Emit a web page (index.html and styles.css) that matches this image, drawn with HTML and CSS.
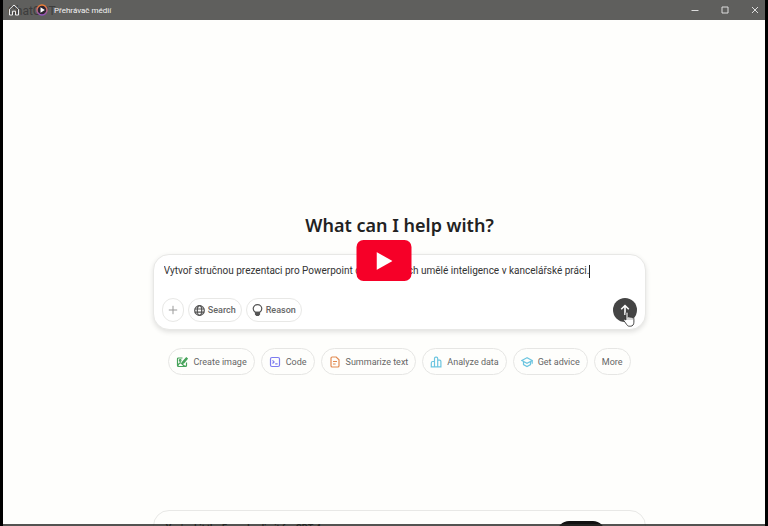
FILE: index.html
```html
<!DOCTYPE html>
<html lang="cs">
<head>
<meta charset="utf-8">
<title>Přehrávač médií</title>
<link rel="stylesheet" href="styles.css">
</head>
<body>
  <div class="window">
    <header class="titlebar">
      <span class="page-name">ChatGPT</span>
      <button class="home" aria-label="Domů">
        <svg width="12" height="12" viewBox="0 0 12 12"><path d="M1.500 5.200 6 1l4.500 4.200V11h-3V7.200h-3V11h-3z" fill="none" stroke="#eee" stroke-linejoin="round"/></svg>
      </button>
      <svg class="app-icon" width="12" height="12" viewBox="0 0 12 12">
        <defs><linearGradient id="ring" x1="0" y1="0" x2="0" y2="1"><stop offset="0" stop-color="#f08030"/><stop offset="1" stop-color="#9050c0"/></linearGradient></defs>
        <circle cx="6" cy="6" r="5" fill="#2c2430" stroke="url(#ring)" stroke-width="1.500"/>
        <path d="M4.500 3.300v5.400L8.800 6z" fill="#fff"/>
      </svg>
      <span class="app-name">Přehrávač médií</span>
      <div class="window-buttons">
        <button aria-label="Minimalizovat"><svg width="8" height="8" viewBox="0 0 8 8"><path d="M.5 4.500h7"/></svg></button>
        <button aria-label="Maximalizovat"><svg width="8" height="8" viewBox="0 0 8 8"><path d="M1 1h6v6H1z"/></svg></button>
        <button aria-label="Zavřít"><svg width="8" height="8" viewBox="0 0 8 8"><path d="m1 1 6 6M7 1 1 7"/></svg></button>
      </div>
    </header>

    <main class="chat">
      <h1>What can I help with?</h1>

      <form class="composer">
        <div class="prompt-row">
          <input class="prompt" type="text" aria-label="Message" value="Vytvoř stručnou prezentaci pro Powerpoint o možnostech umělé inteligence v kancelářské práci.">
          <span class="caret"></span>
        </div>
        <div class="tools">
          <button type="button" class="tool add" aria-label="Add">
            <svg width="10" height="10" viewBox="0 0 10 10"><path d="M5 .8v8.400M.8 5h8.400" stroke="#999" fill="none"/></svg>
          </button>
          <button type="button" class="tool">
            <svg width="11" height="11" viewBox="0 0 11 11" fill="none" stroke="#555" stroke-width="1.200"><circle cx="5.500" cy="5.500" r="4.800"/><ellipse cx="5.500" cy="5.500" rx="2.200" ry="4.800"/><path d="M.8 4h9.400M.8 7.200h9.400"/></svg>
            Search
          </button>
          <button type="button" class="tool">
            <svg width="11" height="12" viewBox="0 0 11 12" fill="none" stroke="#555" stroke-width="1.200"><path d="M3.500 8.400C2.200 7.500 1.200 6.300 1.200 4.800a4.300 4.200 0 0 1 8.600 0c0 1.500-1 2.700-2.300 3.600z"/><path d="M3.500 8.400h4v1.800L6.300 11.500H4.700l-1.200-1.300z" fill="#555"/></svg>
            Reason
          </button>
          <button type="submit" class="send" aria-label="Send">
            <svg width="12" height="12" viewBox="0 0 12 12"><path d="M6 11V1.500M2.200 5.200 6 1.500l3.800 3.700" fill="none" stroke="#fff" stroke-width="1.600"/></svg>
            <svg class="pointer" width="12" height="16" viewBox="0 0 12 16"><path d="M3 9V2.200c0-1.600 2-1.600 2 0v4c.3-.8 1.900-.7 2 .4.400-.8 1.900-.6 2 .4.500-.6 1.900-.4 1.900.8v3.400c0 2.200-1.200 4-3.200 4H6.200c-1.300 0-2-.8-2.700-1.900L.9 9.700c-.6-1.100.6-1.800 1.300-1.200z" fill="#fff" stroke="#333" stroke-width=".9"/><path d="M5 6v3m2-2.500V9m2-2v2" stroke="#777" stroke-width=".6"/></svg>
          </button>
        </div>
      </form>

      <div class="suggestions">
        <button>
          <svg width="12" height="12" viewBox="0 0 12 12" fill="none" stroke="#46a35a" stroke-width="1.200"><path d="M6.500 2H2.500Q1.500 2 1.500 3v6.500q0 1 1 1h7q1 0 1-1V6.500M2 9.500c1.200-3 3-3.500 4.500-1.200 1 1.500 2 2 3.500 2"/><circle cx="4.200" cy="4.500" r=".8"/><path d="m6.500 6.200 3.800-4.400 1 .9-3.600 4.200-1.500.5z" fill="#46a35a"/></svg>
          Create image
        </button>
        <button>
          <svg width="12" height="12" viewBox="0 0 12 12" fill="none" stroke="#7d7cf0" stroke-width="1.200"><rect x="1.500" y="1.500" width="9" height="9" rx="1.500"/><path d="m3.500 4.300 1.600 1.600-1.600 1.600M6.200 7.800h2.400"/></svg>
          Code
        </button>
        <button>
          <svg width="12" height="12" viewBox="0 0 12 12" fill="none" stroke="#e2894f" stroke-width="1.200"><path d="M3.200 1h4L10 3.700v6q0 1.300-1.300 1.300H3.300Q2 11 2 9.700V2.200Q2 1 3.200 1zM4 5.500h4M4 8h2.600"/></svg>
          Summarize text
        </button>
        <button>
          <svg width="12" height="12" viewBox="0 0 12 12" fill="none" stroke="#6cc5e0" stroke-width="1.200"><path d="M4.500 10.800V2.500q0-1.300 1.300-1.300h.6q1.300 0 1.300 1.300v8.300M4.500 5.500H2.700Q1.300 5.500 1.300 7v3.800h9.600V5.500q0-1.300-1.300-1.300H7.700"/></svg>
          Analyze data
        </button>
        <button>
          <svg width="12" height="12" viewBox="0 0 12 12" fill="none" stroke="#6cc5e0" stroke-width="1.200"><path d="M6 1.800.8 4.500 6 7.200l5.200-2.700zM2.500 5.600v3L6 10.500l3.500-1.900v-3M11.200 4.600v3.200"/></svg>
          Get advice
        </button>
        <button>More</button>
      </div>

      <section class="notice">
        <p>You've hit the Free plan limit for GPT-4o.</p>
        <button>Get Plus</button>
      </section>
    </main>

    <button class="play" aria-label="Play">
      <svg width="16" height="18" viewBox="0 0 16 18"><path d="M0 0v18l16-9z" fill="#fff"/></svg>
    </button>
  </div>
</body>
</html>
```

FILE: styles.css
```css
* {
  box-sizing: border-box;
}

body {
  margin: 0;
  font-family: Roboto, "Noto Sans", sans-serif;
  color: #222;
}

button {
  margin: 0;
  padding: 0;
  border: 0;
  background: none;
  font: inherit;
  color: inherit;
}

svg {
  display: block;
  flex: none;
}

.window {
  position: relative;
  display: flex;
  flex-direction: column;
  height: 100vh;
  overflow: hidden;
  border: solid #000;
  border-width: 0 3px;
}

.window:after {
  content: "";
  position: absolute;
  left: 0;
  right: 0;
  bottom: 0;
  height: 2px;
  background: rgba(40, 40, 38, .8);
}

.titlebar {
  position: relative;
  display: flex;
  flex: none;
  align-items: center;
  height: 20px;
  padding-left: 5px;
  background: #5f5f5d;
  color: #f4f4f4;
  font-size: 8px;
}

.page-name {
  position: absolute;
  left: 5px;
  top: 3px;
  color: #3c3c3c;
  font-size: 12px;
  line-height: 16px;
}

.home,
.app-icon,
.app-name {
  position: relative;
}

.app-icon {
  margin-left: 16px;
}

.app-name {
  margin-left: 6px;
}

.window-buttons {
  display: flex;
  gap: 22px;
  margin-left: auto;
  padding-right: 6px;
}

.window-buttons svg {
  fill: none;
  stroke: #ddd;
}

.chat {
  display: flex;
  flex: 1;
  flex-direction: column;
  align-items: center;
  min-height: 0;
  padding: 191px 0 0 31px;
  background: #fefefc;
}

h1 {
  margin: 0;
  font-family: "Noto Sans", "Open Sans", sans-serif;
  font-size: 18px;
  font-weight: 600;
  line-height: 28px;
}

.composer {
  flex: none;
  width: 67.5%;
  margin-top: 15px;
  padding: 8px 8px 7px;
  border: 1px solid #e8e8e6;
  border-radius: 16px;
  background: #fff;
  box-shadow: 0 2px 5px rgba(0, 0, 0, .12);
}

.prompt-row {
  display: flex;
  align-items: center;
  padding-left: 2px;
}

.prompt {
  field-sizing: content;
  max-width: 100%;
  padding: 0;
  border: 0;
  outline: 0;
  background: none;
  color: #333;
  font-family: inherit;
  font-size: 10px;
  line-height: 16px;
}

.caret {
  width: 1px;
  height: 13px;
  background: #222;
}

.tools {
  display: flex;
  align-items: center;
  gap: 4px;
  margin-top: 19px;
}

.tool {
  display: flex;
  align-items: center;
  gap: 3px;
  height: 24px;
  padding: 0 5px;
  border: 1px solid #e8e8e6;
  border-radius: 12px;
  color: #666;
  font-size: 9px;
  font-weight: 500;
}

.send {
  position: relative;
  display: flex;
  align-items: center;
  justify-content: center;
  width: 24px;
  height: 24px;
  margin-left: auto;
  border-radius: 50%;
  background: #444;
}

.pointer {
  position: absolute;
  left: 10px;
  top: 13px;
}

.suggestions {
  display: flex;
  flex: none;
  gap: 6px;
  margin-top: 18px;
}

.suggestions button {
  display: flex;
  align-items: center;
  gap: 5px;
  height: 27px;
  padding: 0 7px;
  border: 1px solid #e6e6e4;
  border-radius: 14px;
  color: #666;
  font-size: 9px;
  white-space: nowrap;
}

.notice {
  display: flex;
  flex: none;
  align-items: flex-start;
  justify-content: space-between;
  width: 67.5%;
  height: 60px;
  margin-top: 135px;
  padding: 10px 40px 0 12px;
  border: 1px solid #e8e8e6;
  border-radius: 16px;
  font-size: 9px;
  font-weight: 700;
}

.notice p {
  margin: 0;
  line-height: 14px;
}

.notice button {
  width: 48px;
  height: 24px;
  border-radius: 12px;
  background: #111;
  color: #fff;
}

.play {
  position: absolute;
  left: 50%;
  top: 240px;
  display: flex;
  align-items: center;
  justify-content: center;
  width: 55px;
  height: 41px;
  border-radius: 7px;
  background: #f60028;
  transform: translateX(-50%);
}
```
